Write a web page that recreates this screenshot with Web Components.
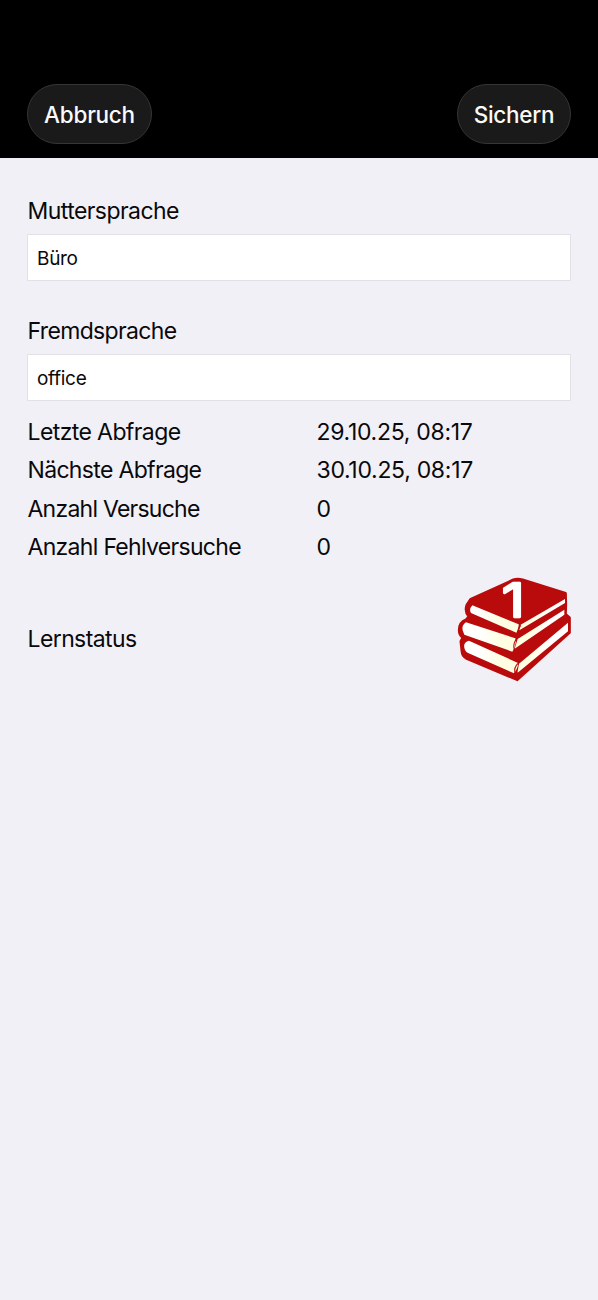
<!DOCTYPE html>
<html lang="de">
<head>
<meta charset="utf-8">
<title>Vokabel bearbeiten</title>
<style>
html,body{margin:0;background:#f1f0f6}
body{font-family:Inter,"Liberation Sans",sans-serif;color:#09090b}
</style>
</head>
<body>
<vocab-editor></vocab-editor>
<script>
function define(name, html) {
  const t = document.createElement('template');
  t.innerHTML = html;
  customElements.define(name, class extends HTMLElement {
    constructor() {
      super();
      this.attachShadow({mode: 'open'}).append(t.content.cloneNode(true));
    }
  });
}

define('pill-button', `
<style>
:host{display:block}
button{display:block;box-sizing:border-box;width:100%;height:60px;padding:1px 0 0;border:1px solid #353535;border-radius:30px;background:#1a1a1a;color:#fafafa;font:500 22.5px/58px Inter,sans-serif;letter-spacing:-.25px;text-align:center;white-space:nowrap}
</style>
<button type="button"><slot></slot></button>`);

define('nav-bar', `
<style>
:host{display:flex;box-sizing:border-box;height:158px;padding:84px 27px 0;background:#000;justify-content:space-between;align-items:flex-start}
</style>
<slot></slot>`);

define('text-field', `
<style>
:host{display:block}
.label{display:block;font-size:23px;line-height:30px;padding-left:.5px;white-space:nowrap}
.box{box-sizing:border-box;height:47px;margin-top:8px;padding-left:9px;border:1px solid #e2e1e6;background:#fff;font-size:19px;line-height:47px;letter-spacing:-.3px}
</style>
<span class="label"><slot name="label"></slot></span>
<div class="box"><slot></slot></div>`);

define('info-row', `
<style>
:host{display:grid;grid-template-columns:289px 1fr;height:38.5px;align-items:center;padding-left:.5px;font-size:23px;line-height:30px;white-space:nowrap}
</style>
<slot name="label"></slot><slot></slot>`);

define('book-stack', `
<style>
:host{display:block;width:130px;height:120px}
svg{display:block;width:100%;height:100%}
text{font:400 138px Inter,sans-serif;fill:#fff;stroke:#fff;stroke-width:7px;stroke-linejoin:round}
</style>
<svg viewBox="0 0 390 360" role="img" aria-label="Lernstatus 1">
<defs>
<linearGradient id="left"><stop offset=".3" stop-color="#fff"/><stop offset=".65" stop-color="#fffee3"/></linearGradient>
<linearGradient id="right"><stop offset=".3" stop-color="#fffee3"/><stop offset=".65" stop-color="#fff"/></linearGradient>
</defs>
<path d="M62 87 L190 29 Q202 24 218 29 L347 69 L348 105 L347 132 L359 143 L359 188 L202 330 L48 265 Q36 258 35 242 L32 214 L38 203 Q27 195 27 180 Q27 157 48 149 L56 139 Q43 125 50 105Z" stroke-linejoin="round" stroke="#b90b0b" stroke-width="7" fill="#b90b0b"/>
<path d="M67 106 Q56 118 63 129 L199 188 Q207 177 206 163Z M48 157 Q33 167 39 184 L43 194 L187 245 Q201 226 196 205Z M57 212 Q36 218 45 240 Q48 247 56 250 L192 310 Q205 292 204 279Z" fill="url(#left)"/>
<path d="M212 164 L345 87 L345 99 L208 181Z M203 207 L343 119 L343 134 L194 236Z M207 281 L354 158 L354 184 L202 309Z" fill="url(#right)"/>
<path d="M212 166 Q203 176 204 188 M199 207 Q188 222 193 239 M204 280 Q191 292 195 309 L205 309" fill="none" stroke="#b90b0b" stroke-width="3.5"/>
<text transform="translate(155 141) scale(1.22 1)">1</text>
</svg>`);

define('status-row', `
<style>
:host{display:flex;align-items:flex-start;justify-content:space-between;font-size:23px;line-height:30px}
.label{padding:54px 0 0 .5px;letter-spacing:-.6px}
book-stack{margin-right:-9px}
</style>
<span class="label"><slot></slot></span><book-stack></book-stack>`);

define('vocab-editor', `
<style>
:host{display:block;min-height:1300px;background:#f1f0f6}
main{padding:38px 27px 0}
.second{margin-top:35px}
.info{margin-top:11.5px}
status-row{margin-top:3.5px}
.a{width:125px}.s{width:114px}
.t1{letter-spacing:-.56px}.t2{letter-spacing:-.64px}
.r1{letter-spacing:-.6px}.r2{letter-spacing:-.67px}.r3{letter-spacing:-.75px}.r4{letter-spacing:-.69px}
.d{letter-spacing:-.3px}
</style>
<nav-bar><pill-button class="a">Abbruch</pill-button><pill-button class="s">Sichern</pill-button></nav-bar>
<main>
<text-field><span slot="label" class="t1">Muttersprache</span><span>Büro</span></text-field>
<text-field class="second"><span slot="label" class="t2">Fremdsprache</span><span>office</span></text-field>
<div class="info">
<info-row><span slot="label" class="r1">Letzte Abfrage</span><span class="d">29.10.25, 08:17</span></info-row>
<info-row><span slot="label" class="r2">Nächste Abfrage</span><span class="d">30.10.25, 08:17</span></info-row>
<info-row><span slot="label" class="r3">Anzahl Versuche</span><span class="d">0</span></info-row>
<info-row><span slot="label" class="r4">Anzahl Fehlversuche</span><span class="d">0</span></info-row>
</div>
<status-row>Lernstatus</status-row>
</main>`);
</script>
</body>
</html>
